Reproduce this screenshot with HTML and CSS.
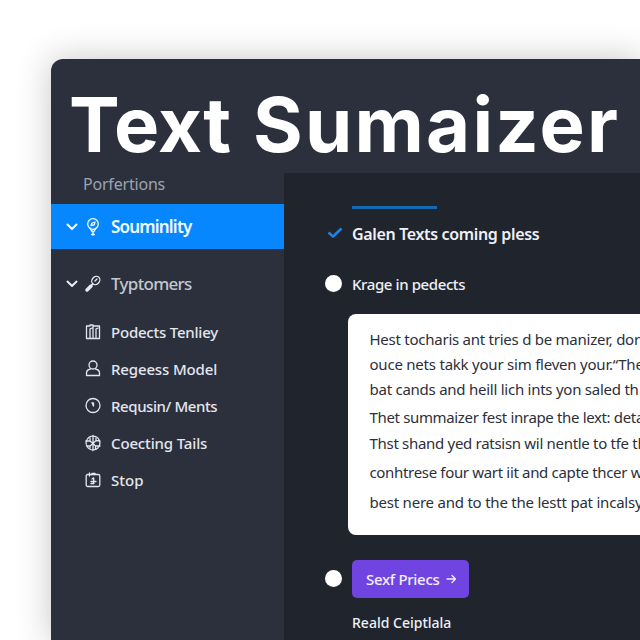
FILE: index.html
```html
<!DOCTYPE html>
<html lang="en">
<head>
<meta charset="utf-8">
<title>Text Sumaizer</title>
<link rel="stylesheet" href="styles.css">
</head>
<body>
<div class="app">
  <header class="header"><h1 class="title">Text <span class="title-wide">Sumaizer</span></h1></header>
  <div class="body">
    <nav class="sidebar">
      <div class="caption">Porfertions</div>
      <a class="group active">
        <svg class="chevron" viewBox="0 0 12 12"><path d="M1.500 3.500 6 8l4.500-4.500"/></svg>
        <svg class="icon" viewBox="0 0 18 20"><circle cx="9" cy="7" r="5.300"/><path d="M6.200 11.500 8 14.500h2l1.800-3M9 14v4M7.700 17.500h2.600M7 8.500l1-2.500 3-1-1 3z"/></svg>
        <span class="t-soum">Souminlity</span>
      </a>
      <a class="group second">
        <svg class="chevron" viewBox="0 0 12 12"><path d="M1.500 3.500 6 8l4.500-4.500"/></svg>
        <svg class="icon" viewBox="0 0 18 20"><ellipse cx="11.800" cy="6.500" rx="3.700" ry="4.500" transform="rotate(42 11.800 6.500)"/><path d="m8.700 10-2 2M11 7l2-2"/><path class="thick" d="m7 12-4 4"/></svg>
        <span class="t-typ">Typtomers</span>
      </a>
      <ul class="menu">
        <li><svg class="icon" viewBox="0 0 18 20"><path d="M2.500 4h3.500v-1h3v1h6.500v12.500h-13zM6 7v9M9 4.500v11.500M12 7v9M6 7l2-1M12 7l2-1"/></svg><span class="t-pod">Podects Tenliey</span></li>
        <li><svg class="icon" viewBox="0 0 18 20"><circle cx="9" cy="6" r="4"/><path d="M6.500 10C4 10.500 2.500 12 2.500 14v2.500h13V14c0-2-1.500-3.500-4-4"/></svg><span class="t-reg">Regeess Model</span></li>
        <li><svg class="icon" viewBox="0 0 18 20"><circle cx="9" cy="9.500" r="7"/><path d="M8 6.500 9.300 9.500M9.500 7v3"/></svg><span class="t-req">Requsin/ Ments</span></li>
        <li><svg class="icon" viewBox="0 0 18 20"><circle cx="9" cy="10" r="6.900" stroke-dasharray="4 1.200"/><path d="M9 2.500v15M2 8h4l3 2.500 3-3 4 .5M3 13h3l3-2.500 2.500 2.500H16M6 5v3M12 5v2.500M6 13v2M11.500 13v2.500"/></svg><span class="t-coe">Coecting Tails</span></li>
        <li><svg class="icon" viewBox="0 0 18 20"><rect x="2.200" y="4.500" width="13.600" height="12" rx="1.500"/><path d="M5.500 3v3M8 4.500V3.300h3v1.200M9.700 8v5.500M7 11.500h5M7 13.500h3M9.500 8 8 9"/></svg><span class="t-stop">Stop</span></li>
      </ul>
    </nav>
    <main class="main">
      <div class="rule"></div>
      <div class="row check-row">
        <svg class="check" viewBox="0 0 16 12"><path d="m1.500 5.500 4.500 4L14.500 1.500"/></svg>
        <span class="t-galen">Galen Texts coming pless</span>
      </div>
      <div class="row krage-row"><span class="dot"></span><span class="t-krage">Krage in pedects</span></div>
      <section class="card">
        <p class="p1">Hest tocharis ant tries d be manizer, dor</p>
        <p class="p2">ouce nets takk your sim fleven your.“The</p>
        <p class="p3">bat cands and heill lich ints yon saled th</p>
        <p class="p4">Thet summaizer fest inrape the lext: deta</p>
        <p class="p5">Thst shand yed ratsisn wil nentle to tfe th</p>
        <p class="p6">conhtrese four wart iit and capte thcer w</p>
        <p class="p7">best nere and to the the lestt pat incalsy</p>
      </section>
      <div class="row action-row">
        <span class="dot"></span>
        <button class="button"><span class="t-btn">Sexf Priecs</span><svg class="arrow" viewBox="0 0 11 10"><path d="M1 5h8.500M6 1.500 9.500 5 6 8.500"/></svg></button>
      </div>
      <div class="footer-label"><span class="t-foot">Reald Ceiptlala</span></div>
    </main>
  </div>
</div>
</body>
</html>
```
FILE: styles.css
```css
* { box-sizing: border-box; }
body {
  margin: 0;
  height: 640px;
  overflow: hidden;
  padding: 59px 0 0 51px;
  background: #fff;
  font-family: "Noto Sans", sans-serif;
}
svg { fill: none; stroke: currentColor; stroke-width: 1.3; stroke-linecap: round; stroke-linejoin: round; flex: none; }
span, p, h1, .caption { white-space: nowrap; }
.app {
  width: 589px;
  height: 581px;
  border-radius: 12px 0 0 0;
  background: #2b303c;
  box-shadow: 0 0 34px 2px rgba(0, 0, 0, .2), 30px 30px 34px 2px rgba(0, 0, 0, .2);
  overflow: hidden;
}
.header { height: 114px; padding: 20px 0 0 18px; }
.title {
  margin: 0;
  color: #fff;
  font: 700 76px/90px Inter, sans-serif;
  letter-spacing: .2px;
  word-spacing: 3.500px;
}
.title-wide { letter-spacing: 2.200px; }
.body { display: flex; height: 467px; }
.sidebar { width: 233px; flex: none; color: #e3e6ef; font-size: 15px; font-weight: 500; }
.caption { height: 31px; padding-left: 32px; font-size: 16px; font-weight: 400; line-height: 22px; letter-spacing: -.2px; color: #9da2b2; }
.group { display: flex; align-items: center; height: 45px; padding-left: 15px; font-size: 17px; }
.group .icon { margin: 0 9px 0 6px; }
.active { background: #0787fd; color: #f4fcff; font-weight: 600; }
.second { margin-top: 12px; color: #c3c7d2; }
.second svg { color: #e8ebf3; }
.t-soum { letter-spacing: -.8px; }
.t-typ { letter-spacing: -.7px; }
.t-pod { letter-spacing: -.22px; }
.t-reg { letter-spacing: -.15px; }
.t-req { letter-spacing: -.42px; }
.t-coe { letter-spacing: -.15px; }
.chevron { width: 12px; height: 12px; stroke-width: 2; }
.icon { width: 18px; height: 20px; }
.thick { stroke-width: 3.500; }
.menu { list-style: none; margin: 7px 0 0; padding: 0 0 0 33px; }
.menu li { display: flex; align-items: center; gap: 9px; height: 37.200px; }
.main { flex: 1; min-width: 0; background: #20242d; color: #eef0f6; padding: 33px 0 0 40px; overflow: hidden; }
.rule { width: 85px; height: 3px; margin-left: 28px; background: #1768b4; }
.row { display: flex; align-items: center; font-size: 15px; font-weight: 500; }
.check-row { height: 30px; margin-top: 10px; font-size: 16px; font-weight: 600; padding-left: 3px; letter-spacing: -.35px; }
.check { width: 16px; height: 12px; margin: -3px 9px 0 0; color: #1e83e6; stroke-width: 2.600; stroke-linecap: butt; }
.krage-row { height: 30px; margin-top: 20px; letter-spacing: -.4px; }
.dot { width: 17px; height: 17px; border-radius: 50%; background: #fff; margin: -1px 10px 0 1px; flex: none; }
.card {
  margin: 15px 0 0 24px;
  height: 221px;
  padding: 13px 0 0 21.500px;
  border-radius: 8px 0 0 8px;
  background: #fff;
  color: #2c2f3a;
  font-size: 15px;
  line-height: 25px;
  overflow: hidden;
}
.card p { margin: 0; }
.card .p1 { letter-spacing: -.25px; }
.card .p2 { letter-spacing: -.22px; }
.card .p3 { letter-spacing: -.25px; }
.card .p4 { margin-top: 3px; letter-spacing: -.35px; }
.card .p5 { margin-top: 1px; letter-spacing: -.3px; }
.card .p6 { margin-top: 4px; letter-spacing: -.33px; }
.card .p7 { margin-top: 5px; letter-spacing: -.22px; }
.action-row { height: 38px; margin-top: 25px; }
.button {
  display: flex;
  align-items: center;
  width: 117px;
  height: 38px;
  padding: 0 0 0 14px;
  border: 0;
  border-radius: 5px;
  background: #7044e0;
  color: #f3eeff;
  font: 500 15px "Noto Sans", sans-serif;
  letter-spacing: -.3px;
}
.arrow { width: 11px; height: 10px; margin-left: 7px; }
.footer-label { height: 22px; margin: 14px 0 0 28px; font-size: 14px; font-weight: 500; line-height: 22px; }
```
